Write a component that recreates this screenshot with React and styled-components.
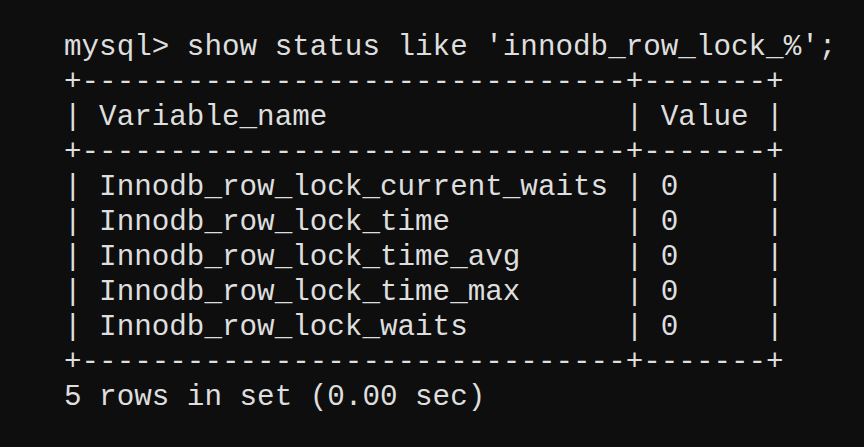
import React from "react";
import styled, { createGlobalStyle } from "styled-components";

const rows = [
  ["Innodb_row_lock_current_waits", "0"],
  ["Innodb_row_lock_time", "0"],
  ["Innodb_row_lock_time_avg", "0"],
  ["Innodb_row_lock_time_max", "0"],
  ["Innodb_row_lock_waits", "0"],
];

const nameWidth = 29;
const valueWidth = 5;

const pad = (s, n) => s + " ".repeat(Math.max(0, n - s.length));
const border = "+" + "-".repeat(nameWidth + 2) + "+" + "-".repeat(valueWidth + 2) + "+";
const row = (a, b) => "| " + pad(a, nameWidth) + " | " + pad(b, valueWidth) + " |";

const App = () => {
  return (
    <>
      <GlobalStyle />
      <Terminal>
        <Line>mysql&gt; show status like 'innodb_row_lock_%';</Line>
        <Line>{border}</Line>
        <Line>{row("Variable_name", "Value")}</Line>
        <Line>{border}</Line>
        {rows.map(([name, value]) => (
          <Line key={name}>{row(name, value)}</Line>
        ))}
        <Line>{border}</Line>
        <Line>5 rows in set (0.00 sec)</Line>
      </Terminal>
    </>
  );
};

export default App;

const GlobalStyle = createGlobalStyle`
  html, body {
    margin: 0;
    padding: 0;
    background: #0e0e0e;
  }
`;

const Terminal = styled.div`
  width: 864px;
  height: 447px;
  box-sizing: border-box;
  padding: 30px 0 0 64px;
  background: #0e0e0e;
  color: #dedede;
  font-family: "Liberation Mono", "DejaVu Sans Mono", monospace;
  font-size: 29.25px;
  line-height: 35px;
  overflow: hidden;
`;

const Line = styled.div`
  white-space: pre;
  height: 35px;
`;
